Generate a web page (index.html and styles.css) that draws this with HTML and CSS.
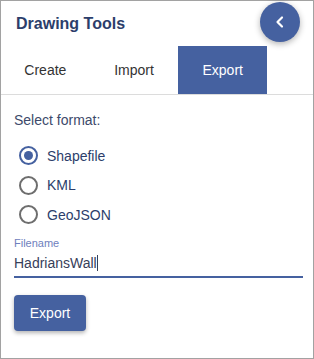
FILE: index.html
```html
<!DOCTYPE html>
<html lang="en">
<head>
  <meta charset="UTF-8">
  <title>Drawing Tools</title>
  <link rel="stylesheet" href="styles.css">
</head>
<body>
  <div class="panel">
    <div class="panel-header">
      <h1 class="title">Drawing Tools</h1>
      <button class="collapse-btn" aria-label="Collapse">
        <svg width="14" height="14" viewBox="0 0 14 14">
          <path d="M9 2.5 L4.5 7 L9 11.5" fill="none" stroke="#fff" stroke-width="2.2" stroke-linecap="round" stroke-linejoin="round"/>
        </svg>
      </button>
    </div>

    <div class="tabs">
      <button class="tab">Create</button>
      <button class="tab">Import</button>
      <button class="tab active">Export</button>
    </div>

    <div class="content">
      <p class="section-label">Select format:</p>
      <div class="radio-group">
        <label class="radio checked"><span class="radio-circle"></span>Shapefile</label>
        <label class="radio"><span class="radio-circle"></span>KML</label>
        <label class="radio"><span class="radio-circle"></span>GeoJSON</label>
      </div>

      <div class="field">
        <span class="field-label">Filename</span>
        <div class="field-input">HadriansWall<span class="caret"></span></div>
      </div>

      <button class="export-btn">Export</button>
    </div>
  </div>
</body>
</html>
```

FILE: styles.css
```css
body {
  margin: 0;
  font-family: "Liberation Sans", Arial, sans-serif;
  background: #fff;
}

.panel {
  width: 314px;
  height: 359px;
  box-sizing: border-box;
  border: 1px solid #a2a2a2;
  background: #fff;
}

.panel-header {
  display: flex;
  justify-content: space-between;
  align-items: center;
  height: 45px;
  padding: 0 13px 0 15px;
}

.title {
  margin: 0;
  font-size: 16px;
  font-weight: bold;
  color: #2c3e6b;
}

.collapse-btn {
  align-self: flex-start;
  width: 40px;
  height: 40px;
  margin-top: 1px;
  border: none;
  border-radius: 50%;
  background: #4561a0;
  box-shadow: 0 2px 6px rgba(0, 0, 0, 0.3);
  display: flex;
  align-items: center;
  justify-content: center;
  padding: 0;
}

.tabs {
  display: flex;
  height: 48px;
  border-bottom: 1px solid #dcdcdc;
}

.tab {
  width: 88.7px;
  border: none;
  background: none;
  font-family: inherit;
  font-size: 14px;
  color: #333;
  padding: 0;
}

.tab.active {
  background: #4561a0;
  color: #fff;
}

.content {
  padding: 17px 13px 0 13px;
}

.section-label {
  margin: 0;
  font-size: 14px;
  color: #3d4a6b;
}

.radio-group {
  display: flex;
  flex-direction: column;
  gap: 10.5px;
  margin-top: 18px;
  padding-left: 5px;
}

.radio {
  display: flex;
  align-items: center;
  gap: 9px;
  height: 19px;
  font-size: 14px;
  color: #2c3e6b;
}

.radio-circle {
  width: 15px;
  height: 15px;
  border: 2px solid #6e6e6e;
  border-radius: 50%;
  display: flex;
  align-items: center;
  justify-content: center;
}

.radio.checked .radio-circle {
  border-color: #4561a0;
}

.radio.checked .radio-circle::after {
  content: "";
  width: 9px;
  height: 9px;
  border-radius: 50%;
  background: #4561a0;
}

.field {
  margin-top: 13px;
  display: flex;
  flex-direction: column;
  width: 289px;
}

.field-label {
  font-size: 11px;
  color: #6e80bd;
}

.field-input {
  display: flex;
  align-items: center;
  height: 22px;
  margin-top: 3px;
  font-size: 14px;
  color: #37405a;
  border-bottom: 2px solid #4561a0;
  padding-bottom: 2px;
}

.caret {
  width: 1px;
  height: 16px;
  background: #37405a;
}

.export-btn {
  margin-top: 17px;
  width: 72px;
  height: 36px;
  border: none;
  border-radius: 4px;
  background: #4561a0;
  color: #fff;
  font-family: inherit;
  font-size: 14px;
  box-shadow: 0 2px 4px rgba(0, 0, 0, 0.3);
  padding: 0;
}
```
